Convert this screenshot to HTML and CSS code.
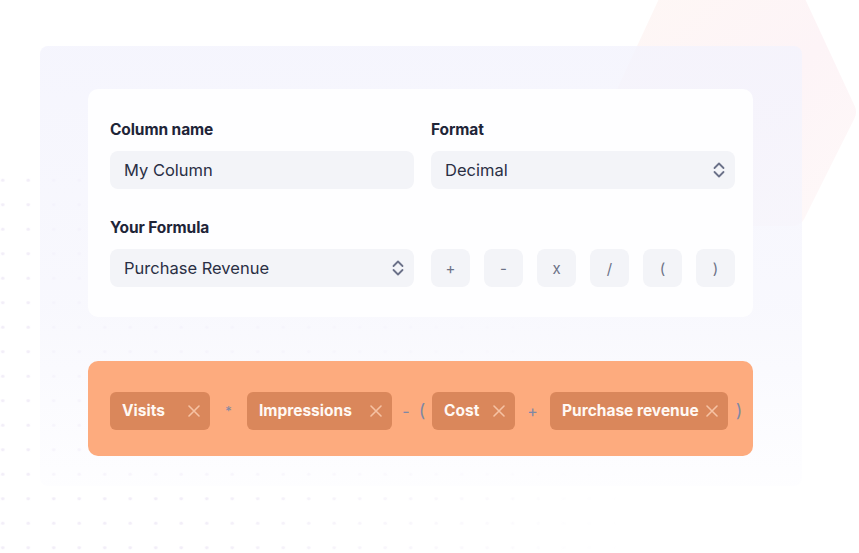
FILE: index.html
```html
<!DOCTYPE html>
<html>
<head>
<meta charset="utf-8">
<link rel="stylesheet" href="styles.css">
</head>
<body>
<div class="stage">
  <svg class="hex" width="290" height="260" viewBox="0 0 290 260">
    <defs>
      <linearGradient id="hg" x1="0" y1="0" x2="1" y2="1">
        <stop offset="0" stop-color="#fef7f5"/>
        <stop offset="0.55" stop-color="#fdf4f7"/>
        <stop offset="1" stop-color="#fef8f8"/>
      </linearGradient>
    </defs>
    <polygon points="36,120 86,12 206,12 256,120 206,220 90,220" fill="url(#hg)" stroke="url(#hg)" stroke-width="28" stroke-linejoin="round"/>
  </svg>
  <div class="dots"></div>

  <div class="panel">
    <div class="card">
      <div class="field">
        <div class="label">Column name</div>
        <div class="input">My Column</div>
      </div>
      <div class="field">
        <div class="label">Format</div>
        <div class="input select">Decimal
          <svg class="chev" width="12" height="18" viewBox="0 0 12 18"><path d="M1.5 7 L6 2.5 L10.5 7 M1.5 11 L6 15.5 L10.5 11" fill="none" stroke="#6b7189" stroke-width="1.8" stroke-linecap="round" stroke-linejoin="round"/></svg>
        </div>
      </div>
      <div class="field">
        <div class="label">Your Formula</div>
        <div class="input select">Purchase Revenue
          <svg class="chev" width="12" height="18" viewBox="0 0 12 18"><path d="M1.5 7 L6 2.5 L10.5 7 M1.5 11 L6 15.5 L10.5 11" fill="none" stroke="#6b7189" stroke-width="1.8" stroke-linecap="round" stroke-linejoin="round"/></svg>
        </div>
      </div>
      <div class="field">
        <div class="label">&nbsp;</div>
        <div class="ops">
          <div class="opbtn">+</div>
          <div class="opbtn">-</div>
          <div class="opbtn">x</div>
          <div class="opbtn">/</div>
          <div class="opbtn">(</div>
          <div class="opbtn">)</div>
        </div>
      </div>
    </div>

    <div class="formula">
      <div class="chip chip-visits"><span>Visits</span><svg class="x" width="12" height="12" viewBox="0 0 12 12"><path d="M1 1 L11 11 M11 1 L1 11" stroke="#f6c2a3" stroke-width="1.6" stroke-linecap="round"/></svg></div>
      <span class="op op-mul">*</span>
      <div class="chip chip-imp"><span>Impressions</span><svg class="x" width="12" height="12" viewBox="0 0 12 12"><path d="M1 1 L11 11 M11 1 L1 11" stroke="#f6c2a3" stroke-width="1.6" stroke-linecap="round"/></svg></div>
      <span class="op op-minus">-</span>
      <span class="op op-open">(</span>
      <div class="chip chip-cost"><span>Cost</span><svg class="x" width="12" height="12" viewBox="0 0 12 12"><path d="M1 1 L11 11 M11 1 L1 11" stroke="#f6c2a3" stroke-width="1.6" stroke-linecap="round"/></svg></div>
      <span class="op op-plus">+</span>
      <div class="chip chip-rev"><span>Purchase revenue</span><svg class="x" width="12" height="12" viewBox="0 0 12 12"><path d="M1 1 L11 11 M11 1 L1 11" stroke="#f6c2a3" stroke-width="1.6" stroke-linecap="round"/></svg></div>
      <span class="op op-close">)</span>
    </div>
  </div>
</div>
</body>
</html>
```

FILE: styles.css
```css
* { box-sizing: border-box; }
html, body {
  margin: 0;
  padding: 0;
  background: #ffffff;
  font-family: "Inter", "Lato", sans-serif;
}
.stage {
  position: relative;
  width: 859px;
  height: 553px;
  overflow: hidden;
  padding-top: 46px;
  padding-left: 40px;
}
.hex {
  position: absolute;
  left: 586px;
  top: -8px;
  z-index: 0;
}
.dots {
  position: absolute;
  left: 0;
  top: 168px;
  width: 620px;
  height: 385px;
  z-index: 0;
  background-image: radial-gradient(circle, rgba(240, 235, 247, 0.85) 1.4px, transparent 2px);
  background-size: 25.5px 24.5px;
  background-position: -10px 0;
  -webkit-mask-image: linear-gradient(to right, #000 30%, transparent 100%);
  mask-image: linear-gradient(to right, #000 30%, transparent 100%);
}
.panel {
  position: relative;
  z-index: 1;
  width: 762px;
  height: 440px;
  border-radius: 8px;
  padding: 43px 49px 0 48px;
  background: linear-gradient(to bottom, rgba(243, 243, 253, 0.8) 0%, rgba(246, 246, 253, 0.75) 60%, rgba(252, 252, 255, 0.5) 100%);
}
.card {
  background: rgba(255, 255, 255, 0.85);
  border-radius: 10px;
  width: 665px;
  height: 228px;
  padding: 31px 18px 0 22px;
  display: grid;
  grid-template-columns: 304px 304px;
  align-content: start;
  column-gap: 17px;
  row-gap: 29px;
}
.label {
  font-size: 15.5px;
  font-weight: 700;
  color: #1f2538;
  line-height: 20px;
  height: 20px;
  margin-bottom: 11px;
  letter-spacing: -0.1px;
}
.input {
  height: 38px;
  border-radius: 8px;
  background: #f3f4f8;
  display: flex;
  align-items: center;
  padding: 0 10px 0 14px;
  font-size: 16.5px;
  color: #2a2f44;
  justify-content: space-between;
}
.chev { display: block; }
.ops {
  display: flex;
  gap: 14px;
}
.opbtn {
  width: 39px;
  height: 38px;
  border-radius: 8px;
  background: #f3f4f8;
  display: flex;
  align-items: center;
  justify-content: center;
  font-size: 15px;
  color: #6c7287;
}
.formula {
  margin-top: 44px;
  width: 665px;
  height: 95px;
  border-radius: 10px;
  background: #fdab7e;
  display: flex;
  align-items: center;
  padding: 4px 0 0 22px;
}
.chip {
  height: 38px;
  border-radius: 6px;
  background: #da875b;
  display: flex;
  align-items: center;
  justify-content: space-between;
  padding: 0 10px 0 12px;
  color: #fff9f4;
  font-size: 15.5px;
  font-weight: 700;
}
.chip-visits { width: 100px; }
.chip-imp { width: 145px; }
.chip-cost { width: 83px; }
.chip-rev { width: 178px; }
.x { display: block; }
.op {
  color: #7f88a5;
  font-size: 16px;
  text-align: center;
}
.op-mul { width: 37px; font-size: 13px; }
.op-minus { width: 20px; padding-left: 8px; }
.op-open { width: 20px; font-size: 18px; }
.op-plus { width: 35px; }
.op-close { width: 22px; font-size: 18px; }
```
